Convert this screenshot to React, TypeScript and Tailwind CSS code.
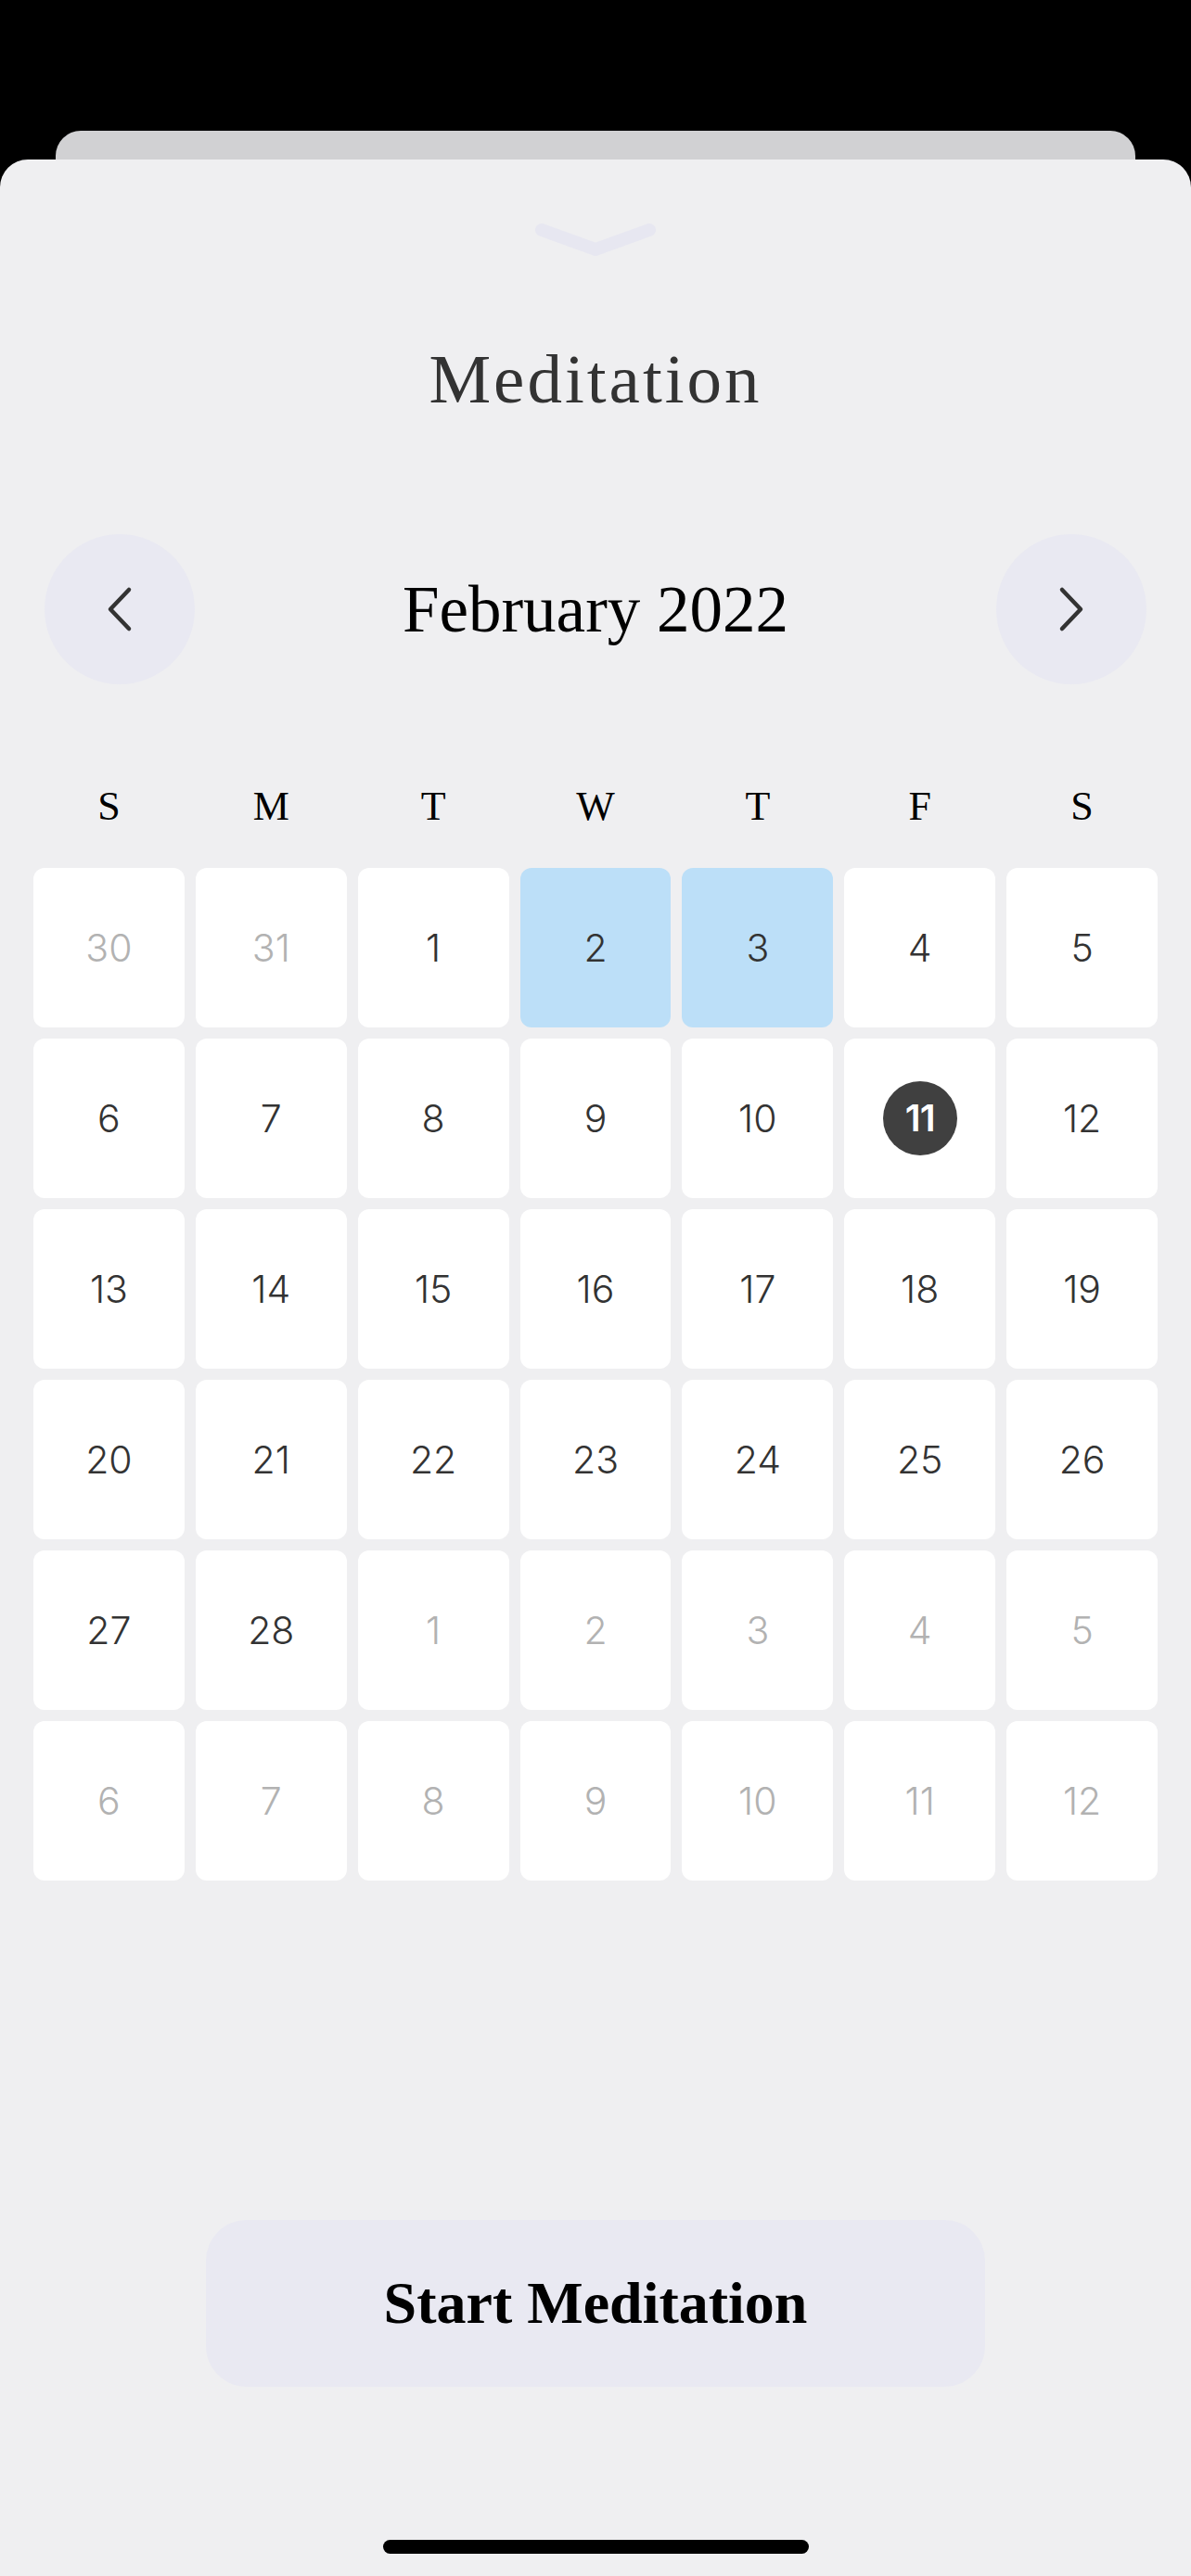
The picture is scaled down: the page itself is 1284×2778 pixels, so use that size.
import React from "react";

type Day = { n: number; muted?: boolean; selected?: boolean; today?: boolean };

const days: Day[] = [
  { n: 30, muted: true }, { n: 31, muted: true }, { n: 1 }, { n: 2, selected: true }, { n: 3, selected: true }, { n: 4 }, { n: 5 },
  { n: 6 }, { n: 7 }, { n: 8 }, { n: 9 }, { n: 10 }, { n: 11, today: true }, { n: 12 },
  { n: 13 }, { n: 14 }, { n: 15 }, { n: 16 }, { n: 17 }, { n: 18 }, { n: 19 },
  { n: 20 }, { n: 21 }, { n: 22 }, { n: 23 }, { n: 24 }, { n: 25 }, { n: 26 },
  { n: 27 }, { n: 28 }, { n: 1, muted: true }, { n: 2, muted: true }, { n: 3, muted: true }, { n: 4, muted: true }, { n: 5, muted: true },
  { n: 6, muted: true }, { n: 7, muted: true }, { n: 8, muted: true }, { n: 9, muted: true }, { n: 10, muted: true }, { n: 11, muted: true }, { n: 12, muted: true },
];

const weekdays = ["S", "M", "T", "W", "T", "F", "S"];

const serif = "font-['Liberation_Serif','Times_New_Roman',serif]";

export default function App() {
  return (
    <div className="w-[1284px] h-[2778px] bg-black flex flex-col overflow-hidden">
      <div className="h-[141px] shrink-0" />
      <div className="mx-[60px] h-[31px] shrink-0 rounded-t-[27px] bg-[#d1d1d3]" />
      <div className="flex-1 rounded-t-[30px] bg-[#efeff1] flex flex-col items-center">
        {/* pull-down chevron */}
        <svg className="mt-[62px] shrink-0" width="140" height="50" viewBox="0 0 140 50" fill="none">
          <path d="M12 14 L70 35 L128 14" stroke="#e7e7f1" strokeWidth="14" strokeLinecap="round" strokeLinejoin="round" />
        </svg>

        <h1 className={`${serif} mt-[89px] text-[75px] leading-[72px] h-[72px] text-[#333333] tracking-[3px]`}>
          Meditation
        </h1>

        {/* month navigation */}
        <div className="mt-[131px] w-full px-[48px] flex items-center justify-between h-[162px]">
          <button className="w-[162px] h-[162px] rounded-full bg-[#e9e9f2] flex items-center justify-center">
            <svg width="40" height="60" viewBox="0 0 40 60" fill="none">
              <path d="M30 9 L10 30 L30 51" stroke="#333333" strokeWidth="4.5" strokeLinecap="round" strokeLinejoin="round" />
            </svg>
          </button>
          <div className={`${serif} text-[71px] leading-[72px] text-black`}>February 2022</div>
          <button className="w-[162px] h-[162px] rounded-full bg-[#e9e9f2] flex items-center justify-center">
            <svg width="40" height="60" viewBox="0 0 40 60" fill="none">
              <path d="M10 9 L30 30 L10 51" stroke="#333333" strokeWidth="4.5" strokeLinecap="round" strokeLinejoin="round" />
            </svg>
          </button>
        </div>

        {/* weekday headers */}
        <div className="mt-[110px] w-full px-[36px] grid grid-cols-7 gap-x-[12px]">
          {weekdays.map((w, i) => (
            <div key={i} className={`${serif} text-center text-[44px] leading-[44px] h-[44px] text-black`}>
              {w}
            </div>
          ))}
        </div>

        {/* day grid */}
        <div className="mt-[44px] w-full px-[36px] grid grid-cols-7 gap-[12px]">
          {days.map((d, i) => (
            <div
              key={i}
              className={`h-[172px] rounded-[12px] flex items-center justify-center ${d.selected ? "bg-[#bcdff8]" : "bg-white"}`}
            >
              {d.today ? (
                <div className="w-[80px] h-[80px] rounded-full bg-[#404040] flex items-center justify-center">
                  <span className="font-['Inter','Liberation_Sans',sans-serif] font-semibold text-[40px] leading-none text-white tracking-[-1px]">
                    {d.n}
                  </span>
                </div>
              ) : (
                <span
                  className={`font-['Inter','Liberation_Sans',sans-serif] font-light text-[41px] leading-none ${d.muted ? "text-[#b2b2b2]" : "text-[#333333]"}`}
                >
                  {d.n}
                </span>
              )}
            </div>
          ))}
        </div>

        {/* start button */}
        <button className="mt-[366px] w-[840px] h-[180px] shrink-0 rounded-[44px] bg-[#e9e9f2] flex items-center justify-center">
          <span className={`${serif} font-bold text-[64px] leading-none text-black`}>Start Meditation</span>
        </button>

        {/* home indicator */}
        <div className="mt-[165px] w-[459px] h-[15px] shrink-0 rounded-full bg-black" />
      </div>
    </div>
  );
}
